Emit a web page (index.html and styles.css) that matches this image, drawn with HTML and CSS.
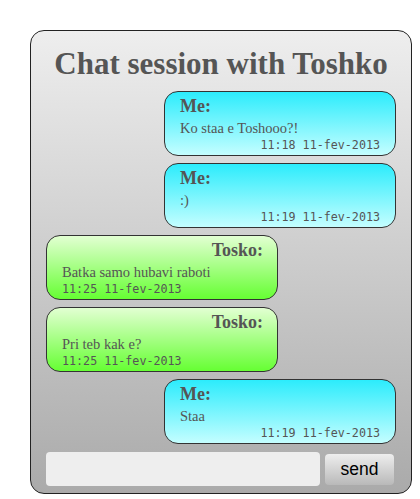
FILE: index.html
```html
<!DOCTYPE html>
<html lang="en">
<head>
    <meta charset="UTF-8">
    <meta name="viewport" content="width=device-width, initial-scale=1.0">
    <title>Chat session</title>
    <link rel="stylesheet" href="styles.css">
</head>
<body>
    <div class="chatBox">
        <h1 class="chatTitle">Chat session with Toshko</h1>
        <div class="messages">
            <div class="msg me">
                <div class="author">Me:</div>
                <div class="text">Ko staa e Toshooo?!</div>
                <div class="time">11:18 11-fev-2013</div>
            </div>
            <div class="msg me">
                <div class="author">Me:</div>
                <div class="text">:)</div>
                <div class="time">11:19 11-fev-2013</div>
            </div>
            <div class="msg friend">
                <div class="author">Tosko:</div>
                <div class="text">Batka samo hubavi raboti</div>
                <div class="time">11:25 11-fev-2013</div>
            </div>
            <div class="msg friend">
                <div class="author">Tosko:</div>
                <div class="text">Pri teb kak e?</div>
                <div class="time">11:25 11-fev-2013</div>
            </div>
            <div class="msg me">
                <div class="author">Me:</div>
                <div class="text">Staa</div>
                <div class="time">11:19 11-fev-2013</div>
            </div>
        </div>
        <div class="sendRow">
            <input type="text" class="msgInput">
            <button class="sendBtn">send</button>
        </div>
    </div>
</body>
</html>
```

FILE: styles.css
```css
* {
    margin: 0;
    padding: 0;
    box-sizing: border-box;
}

body {
    font-family: 'Liberation Serif', 'Times New Roman', serif;
    background: #fff;
    padding: 30px 0 0 30px;
}

.chatBox {
    width: 382px;
    border: 1px solid #222;
    border-radius: 14px;
    background: linear-gradient(#eeeeee, #aaaaaa);
    padding: 15px 15px 7px 15px;
}

.chatTitle {
    color: #555;
    font-size: 31px;
    text-align: center;
    line-height: 36px;
    margin-bottom: 9px;
}

.messages {
    display: flex;
    flex-direction: column;
    gap: 7px;
}

.msg {
    width: 232px;
    height: 65px;
    border: 1px solid #333;
    border-radius: 14px;
    color: #555;
    padding: 3px 15px 0 15px;
}

.me {
    margin-left: auto;
    background: linear-gradient(#2cecfc, #c4feff);
}

.friend {
    background: linear-gradient(#e2ffd2, #66ff33);
    padding-right: 14px;
}

.author {
    font-size: 18px;
    font-weight: bold;
    line-height: 22px;
}

.friend .author {
    text-align: right;
}

.text {
    font-size: 14.5px;
    line-height: 22px;
}

.time {
    font-family: 'DejaVu Sans Mono', monospace;
    font-size: 11.7px;
    line-height: 12px;
}

.me .time {
    text-align: right;
}

.sendRow {
    display: flex;
    align-items: center;
    gap: 5px;
    margin-top: 8px;
}

.msgInput {
    width: 274px;
    height: 34px;
    border: none;
    border-radius: 4px;
    background: #eeeeee;
}

.sendBtn {
    width: 69px;
    height: 31px;
    border: none;
    border-radius: 4px;
    background: linear-gradient(#eeeeee, #b9b9b9);
    font-family: 'Liberation Sans', Arial, sans-serif;
    font-size: 17.5px;
    color: #000;
}
```
